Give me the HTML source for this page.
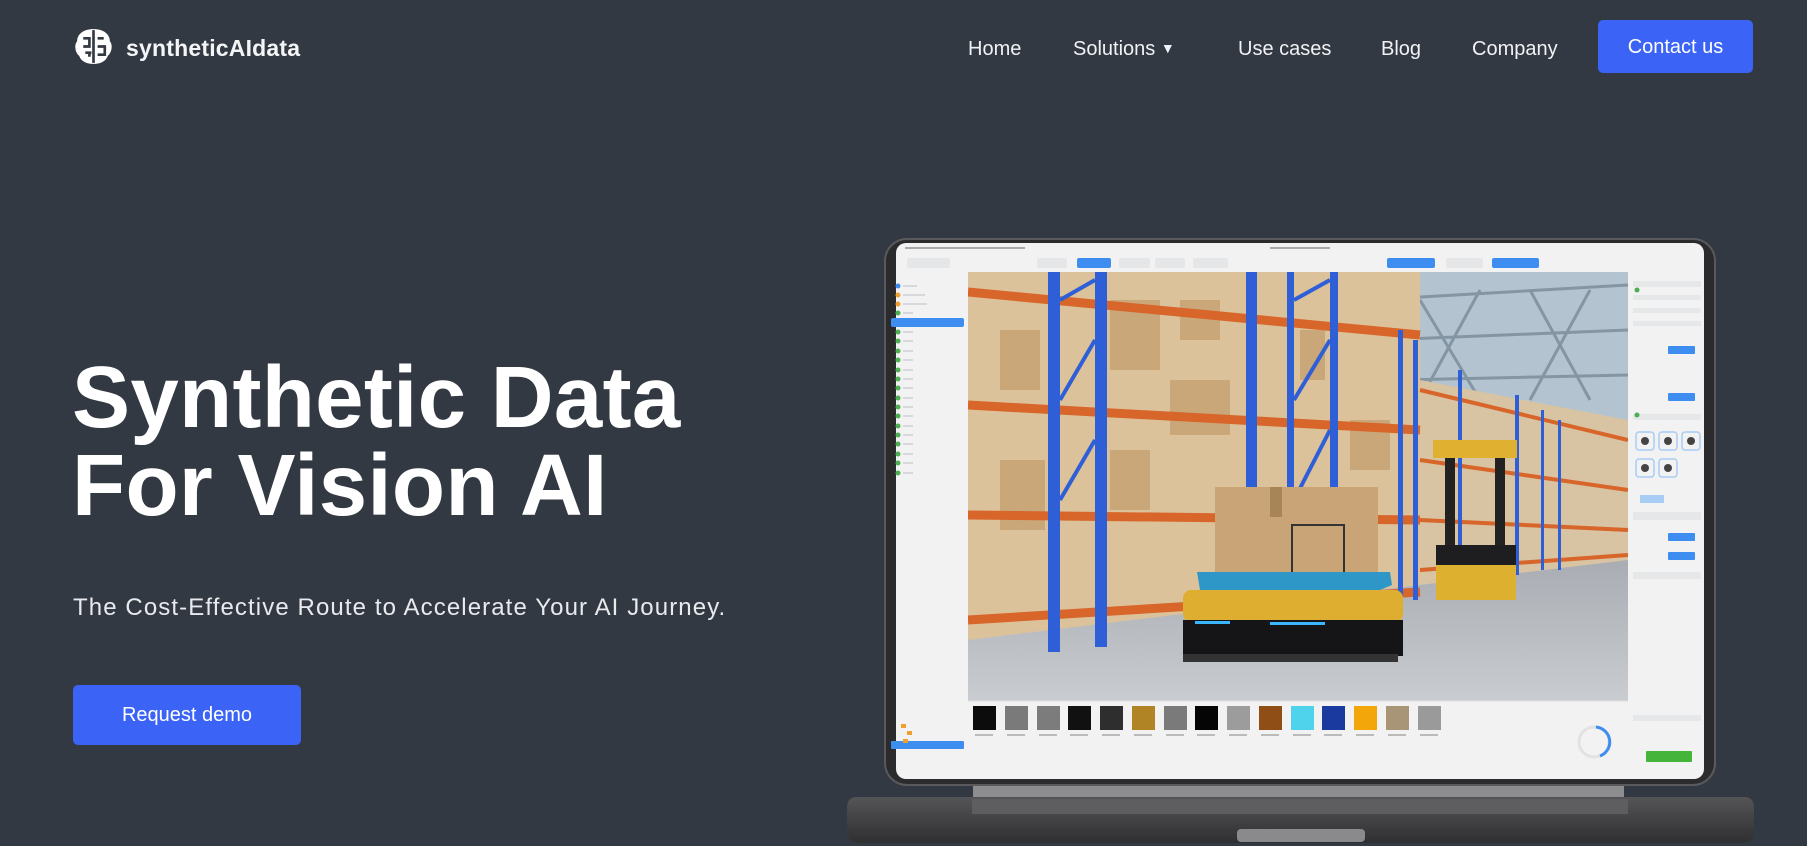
<!DOCTYPE html>
<html><head><meta charset="utf-8">
<style>
*{margin:0;padding:0;box-sizing:border-box}
html,body{width:1807px;height:846px;overflow:hidden;background:#333942;font-family:"Liberation Sans",sans-serif;color:#fff}
.abs{position:absolute}
.nav a{position:absolute;top:38px;font-size:20px;color:#f0f2f5;text-decoration:none;white-space:nowrap}
.btn{position:absolute;background:#3b63f6;border-radius:5px;color:#fff;display:flex;align-items:center;justify-content:center}
h1{position:absolute;left:72px;top:354px;font-size:87px;line-height:88px;font-weight:bold;letter-spacing:0.3px;white-space:nowrap}
.sub{position:absolute;left:73px;top:594px;font-size:24px;letter-spacing:1.1px;color:#e8eaee;white-space:nowrap}
</style></head><body>
<svg class="abs" style="left:0;top:0" width="1807" height="846" viewBox="0 0 1807 846">
<defs>
<clipPath id="ph"><rect x="968" y="272" width="660" height="429"/></clipPath>
<linearGradient id="fl" x1="0" y1="0" x2="0" y2="1"><stop offset="0" stop-color="#a9adb3"/><stop offset="1" stop-color="#c9ccd0"/></linearGradient>
<linearGradient id="bs" x1="0" y1="0" x2="0" y2="1"><stop offset="0" stop-color="#555557"/><stop offset="1" stop-color="#2f2f31"/></linearGradient>
</defs>
<path d="M857 797 H1744 Q1754 797 1754 808 V832 Q1754 843 1740 843 H862 Q847 843 847 832 V808 Q847 797 857 797Z" fill="url(#bs)"/>
<rect x="972" y="799" width="656" height="15" fill="#5e5e60"/>
<rect x="1237" y="829" width="128" height="13" rx="4" fill="#8a8a8c"/>
<rect x="973" y="783" width="651" height="14" fill="#8d8d8f"/>
<rect x="885" y="239" width="830" height="546" rx="22" fill="#2b2b2d" stroke="#5a5a5c" stroke-width="2"/>
<rect x="896" y="243" width="808" height="536" rx="10" fill="#f2f2f2"/>
<g fill="#e4e6e8"><rect x="907" y="258" width="43" height="10" rx="2"/><rect x="1037" y="258" width="30" height="10" rx="2"/><rect x="1119" y="258" width="31" height="10" rx="2"/><rect x="1155" y="258" width="30" height="10" rx="2"/><rect x="1193" y="258" width="35" height="10" rx="2"/><rect x="1446" y="258" width="37" height="10" rx="2"/></g>
<g fill="#3d8ef0"><rect x="1077" y="258" width="34" height="10" rx="2"/><rect x="1387" y="258" width="48" height="10" rx="2"/><rect x="1492" y="258" width="47" height="10" rx="2"/></g>
<g fill="#aaa"><rect x="905" y="247" width="120" height="2"/><rect x="1270" y="247" width="60" height="2"/></g>
<rect x="891" y="318" width="73" height="9" rx="2" fill="#3d8ef0"/>
<circle cx="898" cy="286" r="2.5" fill="#3d8ef0"/><circle cx="898" cy="295" r="2.5" fill="#f0a030"/><circle cx="898" cy="304" r="2.5" fill="#f0a030"/>
<g fill="#4caf50">
<circle cx="898" cy="313" r="2.5"/><circle cx="898" cy="332" r="2.5"/><circle cx="898" cy="341" r="2.5"/><circle cx="898" cy="351" r="2.5"/><circle cx="898" cy="360" r="2.5"/><circle cx="898" cy="370" r="2.5"/><circle cx="898" cy="379" r="2.5"/><circle cx="898" cy="388" r="2.5"/><circle cx="898" cy="398" r="2.5"/><circle cx="898" cy="407" r="2.5"/><circle cx="898" cy="416" r="2.5"/><circle cx="898" cy="426" r="2.5"/><circle cx="898" cy="435" r="2.5"/><circle cx="898" cy="444" r="2.5"/><circle cx="898" cy="454" r="2.5"/><circle cx="898" cy="463" r="2.5"/><circle cx="898" cy="473" r="2.5"/>
</g>
<g fill="#d6d8db">
<rect x="903" y="285" width="14" height="2"/><rect x="903" y="294" width="22" height="2"/><rect x="903" y="303" width="24" height="2"/><rect x="903" y="312" width="10" height="2"/>
<rect x="903" y="331" width="10" height="2"/><rect x="903" y="340" width="10" height="2"/><rect x="903" y="350" width="10" height="2"/><rect x="903" y="359" width="10" height="2"/><rect x="903" y="369" width="10" height="2"/><rect x="903" y="378" width="10" height="2"/><rect x="903" y="387" width="10" height="2"/><rect x="903" y="397" width="10" height="2"/><rect x="903" y="406" width="10" height="2"/><rect x="903" y="415" width="10" height="2"/><rect x="903" y="425" width="10" height="2"/><rect x="903" y="434" width="10" height="2"/><rect x="903" y="443" width="10" height="2"/><rect x="903" y="453" width="10" height="2"/><rect x="903" y="462" width="10" height="2"/><rect x="903" y="472" width="10" height="2"/>
</g>
<g clip-path="url(#ph)">
<rect x="968" y="272" width="660" height="429" fill="#c9d3da"/>
<rect x="1370" y="272" width="258" height="160" fill="#b3c3cf"/>
<g stroke="#8495a3" stroke-width="3" fill="none"><path d="M1370 300 L1628 285 M1380 340 L1628 330 M1400 380 L1628 375 M1420 300 L1480 400 M1480 290 L1420 400 M1530 290 L1590 400 M1590 290 L1530 400"/></g>
<rect x="968" y="560" width="660" height="141" fill="url(#fl)"/>
<polygon points="968,272 1420,272 1420,585 968,640" fill="#dcc29a"/>
<polygon points="1420,380 1628,420 1628,560 1420,585" fill="#d8c3a2"/>
<g fill="#c9a779"><rect x="1000" y="330" width="40" height="60"/><rect x="1110" y="300" width="50" height="70"/><rect x="1170" y="380" width="60" height="55"/><rect x="1000" y="460" width="45" height="70"/><rect x="1110" y="450" width="40" height="60"/><rect x="1300" y="330" width="25" height="50"/><rect x="1180" y="300" width="40" height="40"/><rect x="1350" y="420" width="40" height="50"/></g>
<g stroke="#d8652a" stroke-width="9" fill="none">
<path d="M968 292 L1420 335 M968 405 L1420 430 M968 515 L1420 520 M968 620 L1420 592"/>
</g>
<g stroke="#d8652a" stroke-width="4" fill="none"><path d="M1420 390 L1628 440 M1420 460 L1628 490 M1420 520 L1628 530 M1420 570 L1628 555"/></g>
<g fill="#2f5fd6">
<rect x="1048" y="272" width="12" height="380"/><rect x="1095" y="272" width="12" height="375"/><rect x="1246" y="272" width="11" height="360"/><rect x="1287" y="272" width="7" height="355"/><rect x="1330" y="272" width="8" height="350"/><rect x="1398" y="330" width="5" height="270"/><rect x="1413" y="340" width="5" height="260"/><rect x="1458" y="370" width="4" height="210"/><rect x="1515" y="395" width="4" height="180"/><rect x="1541" y="410" width="3" height="160"/><rect x="1558" y="420" width="3" height="150"/>
</g>
<g stroke="#2f5fd6" stroke-width="4"><path d="M1060 300 L1095 280 M1060 400 L1095 340 M1060 500 L1095 440 M1294 300 L1330 280 M1294 400 L1330 340 M1294 500 L1330 430"/></g>
<rect x="1433" y="440" width="84" height="18" fill="#e0b030"/>
<rect x="1445" y="458" width="10" height="90" fill="#222"/><rect x="1495" y="458" width="10" height="90" fill="#222"/>
<rect x="1436" y="545" width="80" height="20" fill="#1e1e20"/>
<rect x="1436" y="565" width="80" height="35" fill="#deb030"/>
<rect x="1215" y="487" width="163" height="86" fill="#c9a477"/>
<rect x="1270" y="487" width="12" height="30" fill="#a88556"/>
<rect x="1292" y="525" width="52" height="48" fill="none" stroke="#333" stroke-width="2"/>
<path d="M1197 572 H1390 L1392 585 L1380 590 H1200 Z" fill="#2f96c8"/>
<rect x="1183" y="590" width="220" height="32" rx="8" fill="#deae30"/>
<rect x="1183" y="620" width="220" height="36" fill="#151517"/>
<rect x="1183" y="654" width="215" height="8" fill="#333"/>
<rect x="1195" y="621" width="35" height="3" fill="#39b6ff"/><rect x="1270" y="622" width="55" height="3" fill="#39b6ff"/>
</g>
<g fill="#e6e7e9">
<rect x="1633" y="281" width="68" height="6"/><rect x="1633" y="295" width="68" height="5"/><rect x="1633" y="308" width="68" height="5"/><rect x="1633" y="321" width="68" height="5"/><rect x="1633" y="414" width="68" height="6"/><rect x="1633" y="512" width="68" height="8"/><rect x="1633" y="572" width="68" height="7"/><rect x="1633" y="715" width="68" height="6"/>
</g>
<g fill="#3d8ef0"><rect x="1668" y="346" width="27" height="8" rx="1"/><rect x="1668" y="393" width="27" height="8" rx="1"/><rect x="1668" y="533" width="27" height="8" rx="1"/><rect x="1668" y="552" width="27" height="8" rx="1"/></g>
<rect x="1640" y="495" width="24" height="8" fill="#a8cdf4"/>
<g fill="none" stroke="#a8cdf4" stroke-width="1.5"><rect x="1636" y="432" width="18" height="18" rx="3"/><rect x="1659" y="432" width="18" height="18" rx="3"/><rect x="1682" y="432" width="18" height="18" rx="3"/><rect x="1636" y="459" width="18" height="18" rx="3"/><rect x="1659" y="459" width="18" height="18" rx="3"/></g>
<g fill="#444"><circle cx="1645" cy="441" r="4"/><circle cx="1668" cy="441" r="4"/><circle cx="1691" cy="441" r="4"/><circle cx="1645" cy="468" r="4"/><circle cx="1668" cy="468" r="4"/></g>
<circle cx="1637" cy="290" r="2.5" fill="#4caf50"/><circle cx="1637" cy="415" r="2.5" fill="#4caf50"/>
<rect x="1646" y="751" width="46" height="11" rx="1" fill="#44b53a"/>
<line x1="968" y1="701" x2="1628" y2="701" stroke="#ddd"/>
<rect x="891" y="741" width="73" height="8" rx="1" fill="#3d8ef0"/>
<g fill="#f0a030"><rect x="901" y="724" width="5" height="4"/><rect x="907" y="731" width="5" height="4"/><rect x="903" y="739" width="5" height="4"/></g>
<g>
<rect x="973" y="706" width="23" height="24" fill="#0c0c0c"/>
<rect x="1005" y="706" width="23" height="24" fill="#7a7a7a"/>
<rect x="1037" y="706" width="23" height="24" fill="#7c7c7c"/>
<rect x="1068" y="706" width="23" height="24" fill="#111"/>
<rect x="1100" y="706" width="23" height="24" fill="#2e2e2e"/>
<rect x="1132" y="706" width="23" height="24" fill="#b08424"/>
<rect x="1164" y="706" width="23" height="24" fill="#7a7a7a"/>
<rect x="1195" y="706" width="23" height="24" fill="#050505"/>
<rect x="1227" y="706" width="23" height="24" fill="#9c9c9c"/>
<rect x="1259" y="706" width="23" height="24" fill="#8e4e16"/>
<rect x="1291" y="706" width="23" height="24" fill="#4fd3ec"/>
<rect x="1322" y="706" width="23" height="24" fill="#1a3aa0"/>
<rect x="1354" y="706" width="23" height="24" fill="#f2a60a"/>
<rect x="1386" y="706" width="23" height="24" fill="#a89476"/>
<rect x="1418" y="706" width="23" height="24" fill="#9a9a9a"/>
</g>
<g fill="#bbb"><rect x="975" y="734" width="18" height="2"/><rect x="1007" y="734" width="18" height="2"/><rect x="1039" y="734" width="18" height="2"/><rect x="1070" y="734" width="18" height="2"/><rect x="1102" y="734" width="18" height="2"/><rect x="1134" y="734" width="18" height="2"/><rect x="1166" y="734" width="18" height="2"/><rect x="1197" y="734" width="18" height="2"/><rect x="1229" y="734" width="18" height="2"/><rect x="1261" y="734" width="18" height="2"/><rect x="1293" y="734" width="18" height="2"/><rect x="1324" y="734" width="18" height="2"/><rect x="1356" y="734" width="18" height="2"/><rect x="1388" y="734" width="18" height="2"/><rect x="1420" y="734" width="18" height="2"/></g>
<circle cx="1594" cy="742" r="15" fill="none" stroke="#e2e2e2" stroke-width="3"/>
<path d="M1596 727 A15 15 0 0 1 1600 756" fill="none" stroke="#3d8ef0" stroke-width="3"/>
</svg>

<svg class="abs" style="left:73px;top:26px" width="41" height="41" viewBox="0 0 40 40">
<path d="M20 3 C10 3 4 8 4 15 C1 18 2 26 6 29 C8 35 14 37 20 37 C26 37 32 35 34 29 C38 26 39 18 36 15 C36 8 30 3 20 3Z" fill="#fff"/>
<path d="M20 4 V36 M10 12 H16 V20 H10 M12 26 H18 M24 12 H30 M24 20 H31 V28 H24 M16 30 V25" stroke="#333942" stroke-width="2.6" fill="none"/>
</svg>
<div class="abs" style="left:126px;top:35px;font-size:23px;font-weight:bold;color:#f4f5f7;letter-spacing:0.2px">syntheticAIdata</div>

<div class="nav">
<a style="left:968px">Home</a>
<a style="left:1073px">Solutions <span style="font-size:14px;position:relative;top:-2px">&#9660;</span></a>
<a style="left:1238px">Use cases</a>
<a style="left:1381px">Blog</a>
<a style="left:1472px">Company</a>
</div>
<div class="btn" style="left:1598px;top:20px;width:155px;height:53px;font-size:20px;padding-top:2px">Contact us</div>

<h1>Synthetic Data<br>For Vision AI</h1>
<div class="sub">The Cost-Effective Route to Accelerate Your AI Journey.</div>
<div class="btn" style="left:73px;top:685px;width:228px;height:60px;font-size:20px">Request demo</div>
</body></html>
